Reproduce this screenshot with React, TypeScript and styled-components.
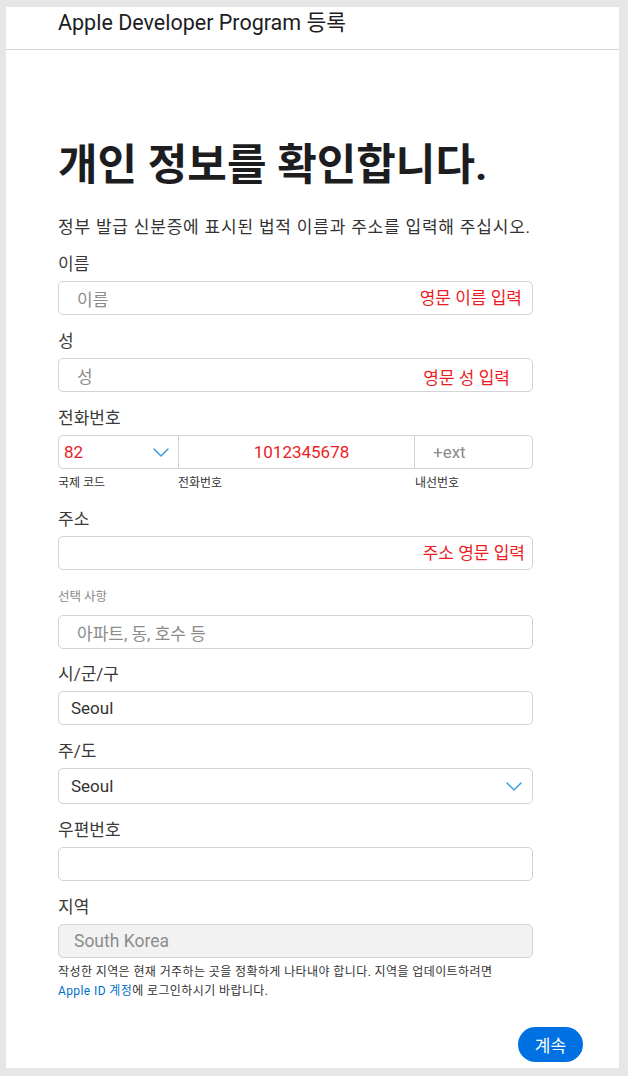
import React from "react";
import styled, { createGlobalStyle } from "styled-components";

const Global = createGlobalStyle`
  html, body { margin: 0; padding: 0; }
  body {
    background: #e6e6e6;
    font-family: "Roboto", "Noto Sans CJK KR", sans-serif;
    color: #333;
  }
  * { box-sizing: border-box; }
`;

const Frame = styled.div`
  padding: 7px 9px 8px 6px;
  min-height: 1076px;
`;

const Panel = styled.div`
  background: #fff;
  height: 1061px;
  display: flex;
  flex-direction: column;
`;

const Header = styled.header`
  height: 43px;
  border-bottom: 1px solid #d6d6d6;
  padding: 3px 0 0 52px;
  font-size: 21.5px;
  line-height: 26px;
  font-weight: 400;
  color: #1d1d1f;
`;

const Main = styled.main`
  padding: 0 0 0 52px;
  width: 527px;
`;

const Title = styled.h1`
  margin: 88px 0 0;
  font-size: 43px;
  line-height: 54px;
  font-weight: 700;
  color: #1d1d1f;
`;

const Lead = styled.p`
  margin: 24px 0 0;
  font-size: 17px;
  line-height: 22px;
  letter-spacing: 0.8px;
  color: #333;
`;

const Field = styled.div<{ $top?: number }>`
  margin-top: ${(p) => p.$top ?? 15}px;
  display: flex;
  flex-direction: column;
`;

const Label = styled.label<{ $small?: boolean }>`
  font-size: ${(p) => (p.$small ? 12.5 : 17)}px;
  line-height: ${(p) => (p.$small ? 16 : 22)}px;
  color: ${(p) => (p.$small ? "#8a8a8a" : "#3a3a3a")};
  margin-bottom: ${(p) => (p.$small ? 10 : 6)}px;
`;

const Box = styled.div<{ $disabled?: boolean; $h?: number }>`
  position: relative;
  height: ${(p) => p.$h ?? 34}px;
  border: 1px solid #d2d2d7;
  border-radius: 5px;
  background: ${(p) => (p.$disabled ? "#f2f2f2" : "#fff")};
  display: flex;
  align-items: center;
  font-size: 17px;
`;

const Placeholder = styled.span<{ $pad?: number; $size?: number }>`
  padding-left: ${(p) => p.$pad ?? 18}px;
  font-size: ${(p) => p.$size ?? 17}px;
  color: #8c8c8c;
`;

const Value = styled.span`
  padding-left: 12px;
  color: #333;
`;

const Note = styled.span<{ $right: number; $dy?: number }>`
  position: absolute;
  right: ${(p) => p.$right}px;
  top: ${(p) => 5 + (p.$dy ?? 0)}px;
  color: #ec1c24;
  font-size: 17px;
  line-height: 22px;
`;

const PhoneRow = styled.div`
  height: 34px;
  border: 1px solid #d2d2d7;
  border-radius: 5px;
  display: grid;
  grid-template-columns: 119px 236px 1fr;
  font-size: 17px;
`;

const Cell = styled.div<{ $center?: boolean }>`
  display: flex;
  align-items: center;
  justify-content: ${(p) => (p.$center ? "center" : "flex-start")};
  border-left: 1px solid #d2d2d7;
  &:first-child { border-left: none; }
`;

const RedText = styled.span<{ $pad?: number }>`
  color: #ec1c24;
  padding-left: ${(p) => p.$pad ?? 0}px;
`;

const SelectCell = styled(Cell)`
  justify-content: space-between;
  padding: 0 9px 0 5px;
`;

const SubLabels = styled.div`
  display: grid;
  grid-template-columns: 120px 237px 1fr;
  margin-top: 6px;
  font-size: 12px;
  line-height: 16px;
  color: #333;
`;

const SelectBox = styled(Box)`
  justify-content: space-between;
  padding-right: 10px;
`;

const Help = styled.p`
  margin: 5px 0 0;
  font-size: 12px;
  line-height: 19px;
  letter-spacing: 0.4px;
  color: #333;
`;

const Link = styled.a`
  color: #0070c9;
  text-decoration: none;
`;

const Footer = styled.div`
  display: flex;
  justify-content: flex-end;
  padding: 26px 36px 0 0;
`;

const Button = styled.button`
  width: 65px;
  height: 35px;
  border: none;
  border-radius: 18px;
  background: #0071e3;
  color: #fff;
  font-family: inherit;
  font-size: 17px;
  padding: 0;
`;

const Chevron = () => (
  <svg width="16" height="9" viewBox="0 0 16 9" fill="none">
    <path d="M1 1l7 7 7-7" stroke="#3d9fdf" strokeWidth="1.5" strokeLinecap="round" strokeLinejoin="round" />
  </svg>
);

export default function App() {
  return (
    <>
      <Global />
      <Frame>
        <Panel>
          <Header>Apple Developer Program 등록</Header>
          <Main>
            <Title>개인 정보를 확인합니다.</Title>
            <Lead>정부 발급 신분증에 표시된 법적 이름과 주소를 입력해 주십시오.</Lead>

            <Field $top={15}>
              <Label>이름</Label>
              <Box>
                <Placeholder>이름</Placeholder>
                <Note $right={10}>영문 이름 입력</Note>
              </Box>
            </Field>

            <Field>
              <Label>성</Label>
              <Box>
                <Placeholder>성</Placeholder>
                <Note $right={22} $dy={3}>영문 성 입력</Note>
              </Box>
            </Field>

            <Field>
              <Label>전화번호</Label>
              <PhoneRow>
                <SelectCell>
                  <RedText>82</RedText>
                  <Chevron />
                </SelectCell>
                <Cell $center>
                  <RedText $pad={10}>1012345678</RedText>
                </Cell>
                <Cell>
                  <Placeholder>+ext</Placeholder>
                </Cell>
              </PhoneRow>
              <SubLabels>
                <span>국제 코드</span>
                <span>전화번호</span>
                <span>내선번호</span>
              </SubLabels>
            </Field>

            <Field $top={17}>
              <Label>주소</Label>
              <Box>
                <Note $right={7}>주소 영문 입력</Note>
              </Box>
            </Field>

            <Field $top={19}>
              <Label $small>선택 사항</Label>
              <Box>
                <Placeholder>아파트, 동, 호수 등</Placeholder>
              </Box>
            </Field>

            <Field $top={14}>
              <Label>시/군/구</Label>
              <Box>
                <Value>Seoul</Value>
              </Box>
            </Field>

            <Field>
              <Label>주/도</Label>
              <SelectBox $h={36}>
                <Value>Seoul</Value>
                <Chevron />
              </SelectBox>
            </Field>

            <Field>
              <Label>우편번호</Label>
              <Box />
            </Field>

            <Field>
              <Label>지역</Label>
              <Box $disabled>
                <Placeholder $pad={15} $size={17.5}>South Korea</Placeholder>
              </Box>
            </Field>

            <Help>
              작성한 지역은 현재 거주하는 곳을 정확하게 나타내야 합니다. 지역을 업데이트하려면
              <br />
              <Link href="#">Apple ID 계정</Link>에 로그인하시기 바랍니다.
            </Help>
          </Main>
          <Footer>
            <Button>계속</Button>
          </Footer>
        </Panel>
      </Frame>
    </>
  );
}
